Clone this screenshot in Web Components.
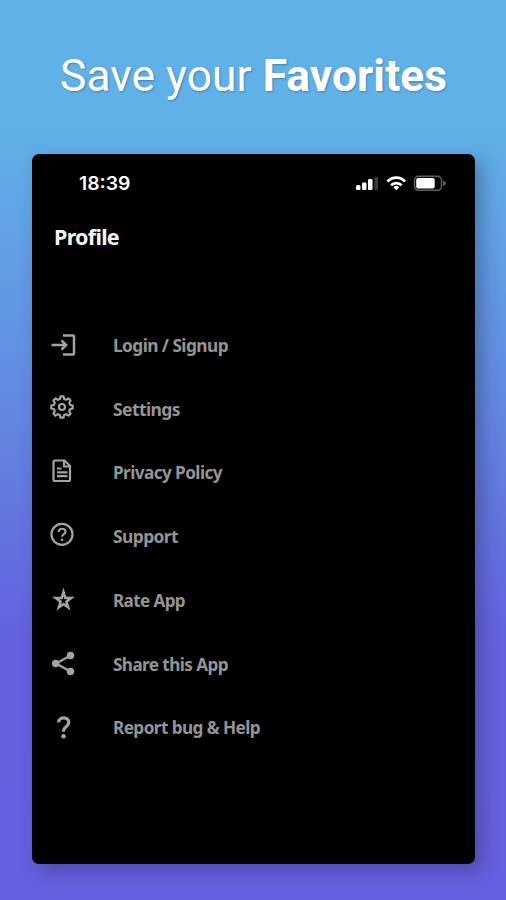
<!DOCTYPE html>
<html lang="en"><head><meta charset="utf-8"><title>Save your Favorites</title>
<style>html,body{margin:0;height:100%}body{overflow:hidden}</style></head>
<body>
<promo-page>
  <promo-title slot="title">Save your <b>Favorites</b></promo-title>
  <phone-screen>
    <status-bar time="18:39"></status-bar>
    <screen-title><span>Profile</span></screen-title>
    <menu-list>
      <menu-row icon="login" w="115">Login / Signup</menu-row>
      <menu-row icon="gear" w="67">Settings</menu-row>
      <menu-row icon="doc" w="109">Privacy Policy</menu-row>
      <menu-row icon="help" w="65">Support</menu-row>
      <menu-row icon="star" w="72">Rate App</menu-row>
      <menu-row icon="share" w="115">Share this App</menu-row>
      <menu-row icon="question" w="147">Report bug &amp; Help</menu-row>
    </menu-list>
  </phone-screen>
</promo-page>
<script>
const define = (name, html, setup) => customElements.define(name, class extends HTMLElement {
  connectedCallback() {
    if (this.shadowRoot) return;
    const root = this.attachShadow({ mode: 'open' });
    root.innerHTML = html;
    if (setup) setup(this, root);
  }
});

define('promo-page', `<style>
  :host{display:flex;flex-direction:column;box-sizing:border-box;width:506px;height:900px;padding:0 31px 36px 32px;
    background:linear-gradient(180deg,#60b1e7 0,#60b1e7 14%,#628be1 43%,#6562df 70%,#6560df 100%)}
</style><slot name="title"></slot><slot></slot>`);

define('promo-title', `<style>
  :host{display:block;box-sizing:border-box;height:154px;padding:49px 0 0 28px;white-space:nowrap;color:#fff;
    font:400 45px/54px Roboto,sans-serif;text-shadow:1px 1px 2px rgba(30,70,110,.45)}
  ::slotted(b){font-weight:700}
  div{transform-origin:0 50%}
</style><div><slot></slot></div>`, (el, root) => fit(root.querySelector('div'), 387));

define('phone-screen', `<style>
  :host{display:flex;flex-direction:column;flex:1;background:#000;border-radius:7px;box-shadow:7px 7px 18px rgba(40,40,90,.38)}
</style><slot></slot>`);

define('status-bar', `<style>
  :host{display:flex;justify-content:space-between;align-items:center;height:60px;padding:0 28px 0 47px;color:#fff;
    font:600 19px/24px Inter,sans-serif}
  span{display:block;transform-origin:0 50%}
  svg{display:block}
</style><span></span>
<svg width="92" height="18" viewBox="0 0 92 18">
  <g fill="#fff"><rect x="1" y="10" width="4.500" height="5" rx="1.500"/><rect x="7" y="7.500" width="4.500" height="7.500" rx="1.200"/><rect x="13" y="4" width="4.500" height="11" rx="1.200"/></g>
  <rect x="19.500" y="2" width="3.500" height="13" rx="1.200" fill="#3c3c3c"/>
  <g fill="none" stroke="#fff" stroke-width="2.700"><path d="M32.500 6.500a12 12 0 0 1 17.600 0"/><path d="M36 10.300a7.500 7.500 0 0 1 10.600 0"/></g>
  <path d="M38.300 12.300a4.300 4.300 0 0 1 6 0l-3 3z" fill="#fff"/>
  <rect x="59.500" y="1.300" width="27" height="14" rx="4" fill="none" stroke="#606060" stroke-width="1.500"/>
  <rect x="61.200" y="3" width="18.500" height="10.600" rx="2.200" fill="#fff"/><path d="M88 5.500q3 1 3 2.800t-3 2.800z" fill="#606060"/>
</svg>`, (el, root) => {
  const s = root.querySelector('span'); s.textContent = el.getAttribute('time'); fit(s, 51.5);
});

define('screen-title', `<style>
  :host{display:block;padding:9px 0 0 22px;height:90px;box-sizing:content-box;color:#f5f5f5;font:700 21px/28px "Noto Sans",sans-serif;letter-spacing:-.7px}
  div{transform-origin:0 50%}
</style><div><slot></slot></div>`, (el, root) => fit(root.querySelector('div'), 65));

define('menu-list', `<style>:host{display:flex;flex-direction:column}</style><slot></slot>`);

const icons = {
  login: '<path stroke-width="2.500" d="M2.500 14H17M12.500 9.300l4.700 4.700-4.700 4.700M14 4.500h10a1 1 0 0 1 1 1v17a1 1 0 0 1-1 1H14"/>',
  gear: '<g transform="translate(0 .5)"><circle cx="13" cy="11.5" r="3"/><path d="M10.9 3.4 11.5 .8h3l.6 2.6 2.1.9 2.3-1.4 2.1 2.1-1.4 2.3.9 2.1 2.6.6v3l-2.6.6-.9 2.1 1.4 2.3-2.1 2.1-2.3-1.4-2.1.9-.6 2.6h-3l-.6-2.6-2.1-.9-2.3 1.4-2.1-2.1 1.4-2.3-.9-2.1-2.6-.6v-3l2.6-.6.9-2.1L4.400 5l2.100-2.100 2.300 1.400z" stroke-linejoin="round"/></g>',
  doc: '<path d="M6 2.500h9.500l5.500 5.500v13.500q0 1.500-1.500 1.500H6q-1.500 0-1.500-1.500V4Q4.500 2.500 6 2.500zM15 3v5.500h5.500"/><path d="M8 10.500h4.500M8 14.300h10.500M8 18.200h10.500"/>',
  help: '<g transform="translate(0 .8)"><circle cx="13" cy="11.500" r="10.500"/><path d="M9.700 9.300c0-4.500 6.800-4.300 6.800-.4 0 2.500-3.400 2.500-3.400 5"/><path d="M13.100 15.800v2.400"/></g>',
  star: '<path stroke-width="2.500" d="M14.500 6l1.800 6.100h5.900l-4.800 3.600 1.800 5.800-4.700-3.500-4.700 3.500 1.800-5.800-4.800-3.600h5.900z"/>',
  share: '<path d="M21.500 5.500 7 13.500l14.500 8"/><g fill="#a3a3a3" stroke="none"><circle cx="21.500" cy="5.500" r="3.700"/><circle cx="6.700" cy="13.500" r="3.700"/><circle cx="21.500" cy="21.500" r="3.700"/></g>',
  question: '<g transform="translate(0 .7)"><path stroke-width="3.200" d="M9.500 8.700c.3-6.200 10.300-6 10.300.2 0 4.300-5.300 4-5.300 8.400v.7"/><circle cx="14.500" cy="22.500" r="2.300" fill="#a3a3a3" stroke="none"/></g>'
};
define('menu-row', `<style>
  :host{display:flex;align-items:center;height:63.75px;padding-left:17px;color:#949494;font:700 18px/26px "Noto Sans",sans-serif;letter-spacing:-.6px}
  svg{display:block;width:28px;height:28px;margin-right:36px;flex:none;fill:none;stroke:#a3a3a3;stroke-width:2.2;overflow:visible}
  div{white-space:nowrap;transform-origin:0 50%}
</style><svg viewBox="0 0 28 28"></svg><div><slot></slot></div>`, (el, root) => {
  root.querySelector('svg').innerHTML = icons[el.getAttribute('icon')];
  fit(root.querySelector('div'), +el.getAttribute('w'));
});

// Condenses a single line of text to the given advance width.
function fit(box, width) {
  box.style.width = 'max-content';
  box.style.transform = `scaleX(${width / box.getBoundingClientRect().width})`;
}
</script>
</body></html>
